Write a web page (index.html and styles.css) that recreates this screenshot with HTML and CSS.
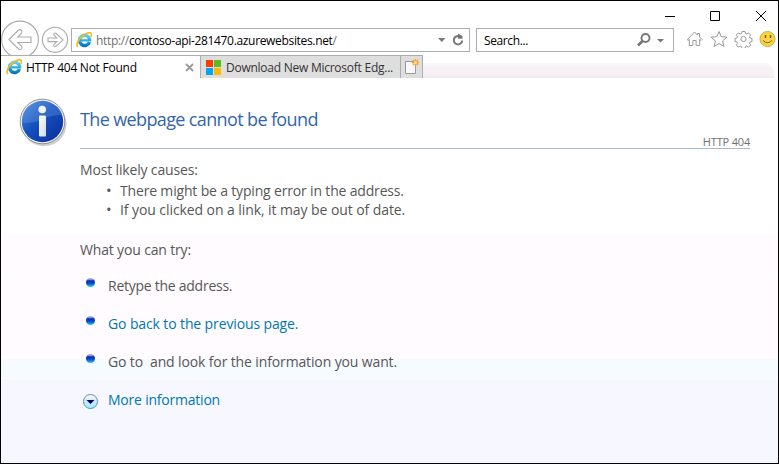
FILE: index.html
```html
<!DOCTYPE html>
<html lang="en">
<head>
<meta charset="utf-8">
<title>HTTP 404 Not Found</title>
<link rel="stylesheet" href="styles.css">
</head>
<body>
<svg class="defs" width="0" height="0" aria-hidden="true">
  <defs>
    <linearGradient id="ieBlue" x1="0" y1="0" x2="0" y2="1"><stop offset="0" stop-color="#5ed0f5"/><stop offset=".5" stop-color="#22aee6"/><stop offset="1" stop-color="#0878c0"/></linearGradient>
    <linearGradient id="dot" x1="0" y1="0" x2="0" y2="1"><stop offset="0" stop-color="#b4bce0"/><stop offset=".22" stop-color="#7888d0"/><stop offset=".3" stop-color="#0a2cb0"/><stop offset=".58" stop-color="#0848c8"/><stop offset="1" stop-color="#18d4f4"/></linearGradient>
    <linearGradient id="info" x1="0" y1="0" x2="1" y2="1"><stop offset="0" stop-color="#4a88dc"/><stop offset=".45" stop-color="#1450bc"/><stop offset="1" stop-color="#0a2c9c"/></linearGradient>
    <linearGradient id="more" x1="0" y1="0" x2="0" y2="1"><stop offset="0" stop-color="#fff"/><stop offset=".45" stop-color="#d4e8f6"/><stop offset="1" stop-color="#9af0fc"/></linearGradient>
    <linearGradient id="stem" x1="0" y1="0" x2="1" y2="1"><stop offset="0" stop-color="#fff"/><stop offset="1" stop-color="#d4d8e2"/></linearGradient>
    <symbol id="ie" viewBox="0 0 16 16">
      <path d="M13.500 10A5.100 5.100 0 1 1 13.700 7.700" fill="none" stroke="url(#ieBlue)" stroke-width="3.400"/>
      <path d="M5 9.500h10.300q.1-1-.1-2.300H5z" fill="#2aaee4"/>
      <path d="M2 14.800C-.1 13.600 1.200 9.300 5.100 5.400 9 1.400 13.600-.2 15 1.200c.8.800.5 2.300-.3 3.800" fill="none" stroke="#fbb814" stroke-width="1.600"/>
    </symbol>
    <symbol id="bullet" viewBox="0 0 10 10"><ellipse cx="5.500" cy="4.500" rx="4.500" ry="4.500" fill="url(#dot)"/></symbol>
  </defs>
</svg>
<div class="window">
  <header class="chrome">
    <div class="caption">
      <svg width="120" height="18" viewBox="0 0 120 18" fill="none" stroke="#000"><path d="M5 9.500h10M50.500 4.500h9v9h-9zM96 4l10 10M106 4l-10 10"/></svg>
    </div>
    <div class="nav">
      <svg class="arrows" width="70" height="35" viewBox="0 0 70 35" fill="none" stroke="#ababab" stroke-width="1.100">
        <circle cx="19" cy="19.500" r="18.400"/>
        <path d="M8 19.500l9.500-9.500q1.500-1 3 .5 1 1.300 0 2.600L16.800 17H30v5.500H16.800l3.700 3.700q1.200 1.500 0 2.700-1.500 1.300-3 .1z"/>
        <circle cx="54" cy="19.800" r="12.600"/>
        <path d="M62 19.800l-7-6.500q-1.200-.7-2 .2-.7 1 .2 1.900l2.600 2.600H47v3.600h8.800l-2.600 2.600q-.9 1-.2 1.900.8.900 2 .2z"/>
      </svg>
      <div class="box address">
        <svg class="ie" width="16" height="16"><use href="#ie"/></svg>
        <span class="url"><i>http://</i>contoso-api-281470.azurewebsites.net<i>/</i></span>
        <svg class="tail" width="30" height="16" viewBox="0 0 30 16"><path d="M0 6h7.500L3.800 10z" fill="#777"/><path d="M21.500 4.300A4.200 4.200 0 1 0 24.200 8.500" fill="none" stroke="#777" stroke-width="2"/><path d="M20 1.500v5.300h4.500V4z" fill="#777"/></svg>
      </div>
      <div class="box search">
        <span class="hint">Search...</span>
        <svg width="28" height="16" viewBox="0 0 28 16"><circle cx="8.500" cy="6" r="4" fill="none" stroke="#777" stroke-width="1.900"/><path d="M5.500 9L1 13.500" stroke="#777" stroke-width="2.600"/><path d="M20 7h7l-3.500 3.500z" fill="#777"/></svg>
      </div>
      <svg class="tools" width="91" height="18" viewBox="0 0 91 18" fill="none" stroke="#999">
        <path d="M1.500 9.500L8.500 2l3 3V3.500h2V7l2.500 2.500-1 1-1.300-1.200V15.500h-3.600v-5H6.900v5H3.300V9.300L2.200 10.500z"/>
        <path d="M33 1.500l2.200 5.200 5.700.5-4.300 3.700 1.300 5.600-4.900-3-4.900 3 1.300-5.600-4.300-3.700 5.700-.5z"/>
        <circle cx="57.500" cy="9" r="2.600"/>
        <path d="M56 1.500h3l.5 2 1.300.5 1.800-1.100 2 2-1.100 1.800.5 1.300 2 .5v3l-2 .5-.5 1.300 1.100 1.800-2 2-1.800-1.100-1.300.5-.5 2h-3l-.5-2-1.300-.5-1.800 1.100-2-2 1.100-1.800-.5-1.300-2-.5v-3l2-.5.5-1.300-1.100-1.800 2-2L54.200 4l1.300-.5z"/>
        <circle cx="81.500" cy="9" r="7.500" fill="#fdd43c" stroke="#c6ad4c"/><path d="M79.500 5v3M84.500 5v3" stroke="#6c5719" stroke-width="1.400"/><path d="M77 10.500q4.500 4.500 9 0" stroke="#806516"/>
      </svg>
    </div>
    <div class="tabs">
      <div class="tab active">
        <svg class="ie" width="16" height="16"><use href="#ie"/></svg>
        <span class="t1">HTTP 404 Not Found</span>
        <svg class="close" width="9" height="9" viewBox="0 0 9 9"><path d="M1 1l7 7M8 1L1 8" stroke="#999" stroke-width="1.800"/></svg>
      </div>
      <div class="tab idle">
        <svg width="15" height="15" viewBox="0 0 15 15"><path fill="#ff3c00" d="M0 0h7v7H0z"/><path fill="#5dbb1c" d="M8 0h7v7H8z"/><path fill="#00a6f4" d="M0 8h7v7H0z"/><path fill="#ffb900" d="M8 8h7v7H8z"/></svg>
        <span class="t2">Download New Microsoft Edg...</span>
      </div>
      <div class="newtab">
        <svg width="15" height="17" viewBox="0 0 15 17"><path d="M.5 2.500h10v12H.5z" fill="#fbf8fc" stroke="#999"/><path d="M10.500 0v7M7 3.500h7M8 1l5 5M13 1L8 6" stroke="#f3a326" stroke-width="1.300"/><circle cx="10.500" cy="3.500" r="1.500" fill="#ffe28a"/></svg>
      </div>
      <div class="strip"></div>
    </div>
  </header>
  <main>
    <svg class="info" width="50" height="50" viewBox="0 0 50 50">
      <ellipse cx="25" cy="26" rx="22.500" ry="22.300" fill="#bbb" opacity=".7"/>
      <circle cx="23.500" cy="23.500" r="22.300" fill="#f6f6f6" stroke="#8f8f93"/>
      <circle cx="23.500" cy="23.500" r="20.700" fill="url(#info)"/>
      <path d="M3 23a20.500 20.500 0 0 1 40-6Q32 17 25 21T3 25z" fill="#8ab8f4" opacity=".25"/>
      <circle cx="23.200" cy="11.500" r="3.800" fill="#f4f5f8"/><rect x="20" y="17.500" width="7" height="21" rx="1" fill="url(#stem)"/>
    </svg>
    <article>
      <div class="heading"><h1><span>The webpage cannot be found</span></h1><small>HTTP 404</small></div>
      <h2 class="causes"><span>Most likely causes:</span></h2>
      <ul class="plain"><li><b>•</b><span class="c1">There might be a typing error in the address.</span></li><li><b>•</b><span class="c2">If you clicked on a link, it may be out of date.</span></li></ul>
      <h2 class="try"><span>What you can try:</span></h2>
      <ul class="actions">
        <li><svg width="10" height="10"><use href="#bullet"/></svg><span class="a1">Retype the address.</span></li>
        <li><svg width="10" height="10"><use href="#bullet"/></svg><a class="a2">Go back to the previous page.</a></li>
        <li><svg width="10" height="10"><use href="#bullet"/></svg><span class="a3">Go to&nbsp; and look for the information you want.</span></li>
        <li><svg class="expand" width="16" height="16" viewBox="0 0 16 16"><circle cx="8.500" cy="7.500" r="7" fill="url(#more)" stroke="#5a8cc4"/><path d="M4.500 6h8l-4 4z" fill="#000060"/></svg><a class="a4">More information</a></li>
      </ul>
    </article>
  </main>
</div>
</body>
</html>
```
FILE: styles.css
```css
* { box-sizing: border-box; }
body { margin: 0; font-family: "Open Sans", "Noto Sans", sans-serif; color: #575757; }
h1, h2, ul { margin: 0; padding: 0; font-weight: 400; list-style: none; }
svg { display: block; flex: none; }
span, a, small { white-space: pre; }
.defs { position: absolute; }
.window { width: 779px; height: 464px; border: 1px solid #000; overflow: hidden; display: flex; flex-direction: column; background: #fff; }
.chrome { height: 77px; color: #000; font-size: 12px; }
.caption { height: 19px; padding: 6px 0 0 659px; }
.nav { display: flex; height: 35px; align-items: flex-start; }
.box { height: 24px; margin-top: 8px; border: 1px solid #adadad; display: flex; align-items: center; }
.address { width: 399px; padding: 0 1px 0 4px; }
.url { margin: 1px 0 0 4px; letter-spacing: -0.33px; }
.url i { font-style: normal; color: #707070; }
.tail { margin-left: auto; }
.search { width: 198px; margin-left: 6px; padding: 0 8px 0 7px; justify-content: space-between; }
.hint { margin-top: 1px; letter-spacing: -0.38px; }
.tools { margin: 10px 0 0 12px; }
.tabs { height: 23px; display: flex; }
.tab { display: flex; align-items: center; border-top: 1px solid #adadad; }
.active { width: 199px; padding: 0 6px 0 5px; }
.t1 { margin-left: 4px; letter-spacing: -0.25px; }
.close { margin-left: auto; }
.idle { width: 201px; background: #dedede; border: 1px solid #adadad; border-bottom: 0; padding-left: 5px; color: #333; }
.t2 { margin-left: 5px; letter-spacing: -0.25px; }
.newtab { width: 22px; background: #dedede; border: 1px solid #adadad; border-left: 0; border-bottom: 0; padding: 3px 0 0 4px; }
.strip { width: 351px; height: 15px; margin-top: 8px; border-radius: 0 10px 0 0; background: linear-gradient(#faf8f9, #f5f1f4 40%, #f5f1f4 80%, #efedef 90%); }
main { flex: 1; display: flex; background: linear-gradient(#fff 0 155px, #fffbff 155px 197px, #fffdff 197px 200px, #fffbff 200px 281px, #f6fbff 281px 300px, #fff 300px 301px, #f7f7ff 301px); }
.info { margin: 20px 0 0 18px; }
article { margin-left: 11px; width: 670px; font-size: 14px; }
.heading { height: 71px; border-bottom: 1px solid #a9bac8; display: flex; justify-content: space-between; }
h1 { font-size: 18px; line-height: 24px; margin-top: 29px; color: #3465aa; letter-spacing: -0.63px; }
small { font-size: 11px; line-height: 14px; margin-top: 57px; color: #707070; letter-spacing: -0.18px; }
h2 { font-size: 14px; line-height: 20px; letter-spacing: -0.16px; }
.causes { margin-top: 11px; }
.plain { margin-top: 1px; }
.plain li { display: flex; line-height: 19px; padding-left: 26px; }
.plain b { width: 14px; font-weight: 400; font-size: 15px; }
.c1 { letter-spacing: -0.17px; }
.c2 { letter-spacing: -0.08px; }
.try { margin-top: 21px; }
.actions { margin-top: 17px; }
.actions li { display: flex; height: 38px; line-height: 18px; padding-left: 5px; }
.actions svg { margin: 1px 13px 0 0; }
.actions .expand { margin: 3px 10px 0 -3px; }
a { color: #0078ae; }
.a1 { letter-spacing: -0.26px; }
.a2 { letter-spacing: -0.12px; }
.a3 { letter-spacing: -0.13px; }
.a4 { letter-spacing: -0.22px; }
```
